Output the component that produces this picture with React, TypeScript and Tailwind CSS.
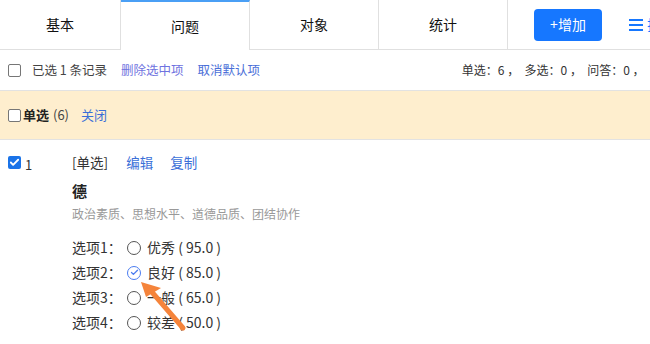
import { Check } from "lucide-react"

const font = { fontFamily: '"Noto Sans CJK SC", "Noto Sans", sans-serif' }

const tabs = ["基本", "问题", "对象", "统计"]

const options = [
  { label: "选项1：", text: "优秀 ( 95.0 )", checked: false },
  { label: "选项2：", text: "良好 ( 85.0 )", checked: true },
  { label: "选项3：", text: "一般 ( 65.0 )", checked: false },
  { label: "选项4：", text: "较差 ( 50.0 )", checked: false },
]

function Box({ checked = false }: { checked?: boolean }) {
  if (checked) {
    return (
      <span className="flex h-[13px] w-[13px] shrink-0 items-center justify-center rounded-[2px] bg-[#1a73e8]">
        <Check className="h-[11px] w-[11px] text-white" strokeWidth={4} />
      </span>
    )
  }
  return <span className="h-[13px] w-[13px] shrink-0 rounded-[2px] border border-[#767676] bg-white" />
}

function Radio({ checked }: { checked: boolean }) {
  if (checked) {
    return (
      <span className="flex h-[14px] w-[14px] items-center justify-center rounded-full border border-[#4a7cf0]">
        <Check className="h-[9px] w-[9px] text-[#4a7cf0]" strokeWidth={3.5} />
      </span>
    )
  }
  return <span className="h-[14px] w-[14px] rounded-full border border-[#555]" />
}

export default function App() {
  return (
    <div className="relative h-[344px] w-[650px] overflow-hidden bg-white text-[#333]" style={font}>
      {/* tabs */}
      <div className="flex h-[50px]">
        {tabs.map((t, i) =>
          i === 1 ? (
            <div
              key={t}
              className="flex w-[129px] shrink-0 items-center justify-center border-t-2 border-r border-[#4a9ff5] border-r-[#e0e0e0] bg-white text-[14px] text-[#111]"
            >
              {t}
            </div>
          ) : (
            <div
              key={t}
              className={`flex shrink-0 items-center justify-center border-b border-r border-[#e0e0e0] text-[14px] text-[#111] ${
                i === 0 ? "w-[121px]" : "w-[129px]"
              }`}
            >
              {t}
            </div>
          )
        )}
        <div className="flex min-w-0 flex-1 items-center overflow-hidden border-b border-[#e0e0e0] pl-[26px]">
          <button className="h-[32px] w-[68px] shrink-0 rounded-[4px] bg-[#1677ff] text-[14px] text-white">+增加</button>
          <span className="ml-[27px] flex shrink-0 items-center gap-[4px] whitespace-nowrap text-[14px] text-[#1677ff]">
            <svg width="14" height="12" viewBox="0 0 14 12">
              <rect x="0" y="0" width="14" height="2" fill="#1677ff" />
              <rect x="0" y="5" width="14" height="2" fill="#1677ff" />
              <rect x="0" y="10" width="14" height="2" fill="#1677ff" />
            </svg>
            排序
          </span>
        </div>
      </div>

      {/* toolbar */}
      <div className="flex h-[40px] items-center pl-[8px] text-[12.5px]">
        <Box />
        <span className="ml-[11px] text-[#444]">已选 1 条记录</span>
        <span className="ml-[14px] text-[#6f73e0]">删除选中项</span>
        <span className="ml-[14px] text-[#4b6fd8]">取消默认项</span>
        <span className="ml-auto shrink-0 whitespace-pre text-[12px] text-[#333]">
          {"单选：6 ，  多选：0 ，  问答：0 ，  "}
        </span>
      </div>

      {/* group header */}
      <div className="flex h-[50px] items-center border-y border-[#e2e2e2] bg-[#feeece] pl-[8px] text-[13px]">
        <Box />
        <span className="ml-[2px] font-bold text-[#222]">单选</span>
        <span className="ml-[4px] text-[#444]">(6)</span>
        <span className="ml-[12px] text-[#3a6fd8]">关闭</span>
      </div>

      {/* question */}
      <div className="flex pl-[8px] pt-[12px]">
        <div className="flex w-[64px] items-start pt-[4px]">
          <Box checked />
          <span className="ml-[4px] mt-[2px] text-[13px] leading-[13px]">1</span>
        </div>
        <div className="flex flex-col">
          <div className="flex items-center gap-[20px] text-[13.5px] leading-[20px]">
            <span className="text-[#333]">[单选]</span>
            <span className="-ml-[2px] text-[#3a6fd8]">编辑</span>
            <span className="-ml-[3px] text-[#3a6fd8]">复制</span>
          </div>
          <div className="mt-[9px] text-[15px] font-bold leading-[20px] text-[#222]">德</div>
          <div className="mt-[3px] text-[12px] leading-[20px] text-[#999]">政治素质、思想水平、道德品质、团结协作</div>
          <div className="mt-[11px] flex flex-col">
            {options.map((o) => (
              <div key={o.label} className="flex h-[25px] items-center text-[14px]">
                <span className="w-[55px] text-[#333]">{o.label}</span>
                <Radio checked={o.checked} />
                <span className="ml-[6px] whitespace-pre text-[#333]">{o.text}</span>
              </div>
            ))}
          </div>
        </div>
      </div>

      {/* annotation arrow */}
      <svg className="absolute left-0 top-0" width="650" height="344">
        <line x1="183" y1="328" x2="151" y2="291" stroke="#f5843b" strokeWidth="5" strokeLinecap="round" />
        <polygon points="141,282 161,288 146,297" fill="#f5843b" />
      </svg>
    </div>
  )
}
